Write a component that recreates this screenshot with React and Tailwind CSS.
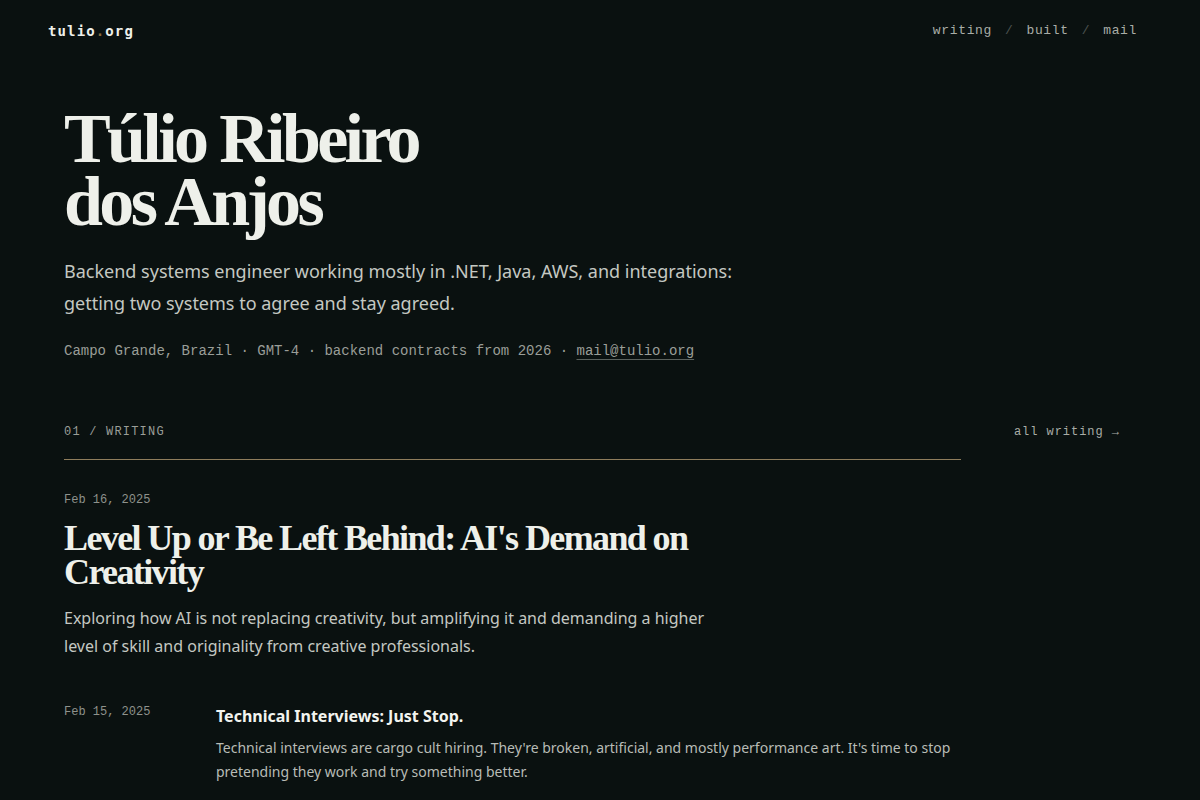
export default function App() {
  const mono = { fontFamily: '"Liberation Mono", "DejaVu Sans Mono", monospace' };
  return (
    <div className="min-h-[800px] w-full bg-[#0a1110] text-[#eef0ea]" style={{ fontFamily: '"Noto Sans", "Open Sans", sans-serif' }}>
      <header className="flex items-center justify-between pl-12 pr-[63px] pt-[22px] h-[40px]">
        <div className="text-[14px] font-bold tracking-[0.08em] text-[#eef0ea]" style={{ fontFamily: '"DejaVu Sans Mono", monospace' }}>
          tulio<span className="text-[#8a6a3e]">.</span>org
        </div>
        <nav className="flex items-center gap-[13px] text-[13px] tracking-[0.05em] text-[#a9ada7]" style={mono}>
          <span>writing</span>
          <span className="text-[#4b524f]">/</span>
          <span>built</span>
          <span className="text-[#4b524f]">/</span>
          <span>mail</span>
        </nav>
      </header>

      <main className="px-16">
        <section className="pt-[67px]">
          <h1 className="text-[70px] font-bold leading-[0.9] tracking-[-0.052em] text-[#eef0ea]" style={{ fontFamily: '"Liberation Serif", "Times New Roman", serif' }}>
            Túlio Ribeiro
            <br />
            dos Anjos
          </h1>
          <p className="mt-[22px] max-w-[690px] text-[18px] leading-[32px] text-[#c4c8c2]">
            Backend systems engineer working mostly in .NET, Java, AWS, and integrations: getting two systems to agree and stay agreed.
          </p>
          <p className="mt-[22px] text-[14px] leading-[20px] text-[#9a9e98]" style={mono}>
            Campo Grande, Brazil · GMT-4 · backend contracts from 2026 ·{' '}
            <span className="underline decoration-[#5a615d] underline-offset-[4px]">mail@tulio.org</span>
          </p>
        </section>

        <section className="mt-[62px]">
          <div className="flex items-center justify-between pr-[16px] text-[12px] tracking-[0.1em] text-[#9a9e98]" style={mono}>
            <span>01 / WRITING</span>
            <span className="text-[#a9ada7] tracking-[0.08em]">all writing →</span>
          </div>
          <div className="mt-[18px] h-px w-[897px] bg-[#8f7d5c]" />

          <article className="pt-[32px]">
            <div className="text-[12px] leading-[16px] text-[#8e928c]" style={mono}>Feb 16, 2025</div>
            <h2 className="mt-[13px] max-w-[700px] text-[36px] font-bold leading-[34px] tracking-[-0.045em] text-[#eef0ea]" style={{ fontFamily: '"Liberation Serif", "Times New Roman", serif' }}>
              Level Up or Be Left Behind: AI's Demand on Creativity
            </h2>
            <p className="mt-[15px] max-w-[672px] text-[16px] leading-[28px] text-[#c4c8c2]">
              Exploring how AI is not replacing creativity, but amplifying it and demanding a higher level of skill and originality from creative professionals.
            </p>
          </article>

          <article className="mt-[43px] grid w-[897px] grid-cols-[152px_1fr]">
            <div className="pt-[1px] text-[12px] leading-[16px] text-[#8e928c]" style={mono}>Feb 15, 2025</div>
            <div className="pt-[1px]">
              <h3 className="text-[16px] font-bold leading-[24px] text-[#f2f4ef]">Technical Interviews: Just Stop.</h3>
              <p className="mt-[8px] text-[14px] leading-[24px] text-[#b8bcb6]">
                Technical interviews are cargo cult hiring. They're broken, artificial, and mostly performance art. It's time to stop pretending they work and try something better.
              </p>
            </div>
          </article>
        </section>
      </main>
    </div>
  );
}
